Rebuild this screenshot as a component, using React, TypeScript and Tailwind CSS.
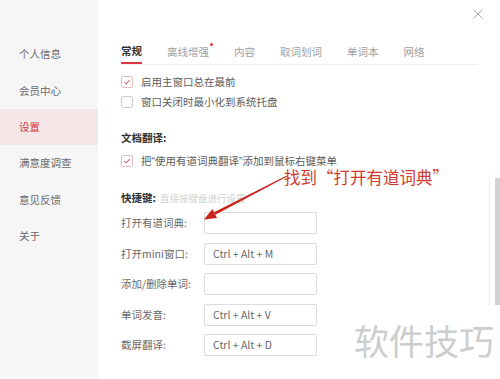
import React from 'react';

const font = { fontFamily: '"Noto Sans CJK SC", "Noto Sans", sans-serif' };

const menu = ['个人信息', '会员中心', '设置', '满意度调查', '意见反馈', '关于'];
const tabs = ['常规', '离线增强', '内容', '取词划词', '单词本', '网络'];
const keys = [
  { label: '打开有道词典:', value: '' },
  { label: '打开mini窗口:', value: 'Ctrl + Alt + M' },
  { label: '添加/删除单词:', value: '' },
  { label: '单词发音:', value: 'Ctrl + Alt + V' },
  { label: '截屏翻译:', value: 'Ctrl + Alt + D' },
];

const Check = ({ on }: { on: boolean }) => (
  <span
    className={`w-[12px] h-[12px] rounded-[2px] border flex items-center justify-center bg-white ${
      on ? 'border-[#e6bcbe]' : 'border-[#cccccc]'
    }`}
  >
    {on && (
      <svg width="8" height="8" viewBox="0 0 8 8">
        <path d="M1.3 4.2 L3.2 5.9 L6.7 2.1" fill="none" stroke="#d9363e" strokeWidth="1" />
      </svg>
    )}
  </span>
);

const Row = ({ on, children }: { on: boolean; children: React.ReactNode }) => (
  <div className="h-[20px] flex items-center gap-[8px]">
    <Check on={on} />
    <span className="text-[10.5px] leading-[14px] text-[#5c5c5c]">{children}</span>
  </div>
);

const Q = ({ c }: { c: string }) => (
  <span style={{ fontFamily: '"Liberation Sans", sans-serif' }}>{c}</span>
);

export default function App() {
  return (
    <div className="relative w-[500px] h-[379px] overflow-hidden bg-white flex" style={font}>
      <div className="w-[98px] h-full bg-[#f6f6f6] pt-[36px]">
        {menu.map((m) => (
          <div
            key={m}
            className={`h-[36.4px] flex items-center pl-[19px] text-[10.5px] ${
              m === '设置' ? 'bg-[#f5e7e7] text-[#d9363e]' : 'text-[#6a6a6a]'
            }`}
          >
            {m}
          </div>
        ))}
      </div>

      <div className="flex-1 pt-[39px] pl-[23px] pr-[22px]">
        <div className="flex gap-[25px] h-[26px] border-b border-[#eeeeee]">
          {tabs.map((t, i) => (
            <div
              key={t}
              className={`relative h-full flex items-center text-[10.5px] ${
                i === 0 ? 'font-bold text-[#333] border-b-2 border-[#d9363e] -mb-px' : 'text-[#a0a0a0]'
              }`}
            >
              {t}
              {i === 1 && (
                <span className="absolute right-[-4px] top-[4px] w-[3px] h-[3px] rounded-full bg-[#e0393e]" />
              )}
            </div>
          ))}
        </div>

        <div className="pt-[7px]">
          <Row on>启用主窗口总在最前</Row>
          <Row on={false}>窗口关闭时最小化到系统托盘</Row>
        </div>

        <div className="h-[20px] mt-[16px] flex items-center text-[10.5px] font-bold text-[#333]">
          文档翻译:
        </div>
        <div className="mt-[3px]">
          <Row on>
            把<Q c="“" />使用有道词典翻译<Q c="”" />添加到鼠标右键菜单
          </Row>
        </div>

        <div className="h-[20px] mt-[17px] flex items-center gap-[4px]">
          <span className="text-[10.5px] font-bold text-[#333]">快捷键:</span>
          <span className="text-[9.5px] text-[#d2d2d2]">直接按键盘进行设置</span>
        </div>

        <div className="mt-[4px] flex flex-col gap-[8.5px]">
          {keys.map((k) => (
            <div key={k.label} className="flex items-center">
              <span className="w-[83px] text-[10.5px] text-[#6a6a6a]">{k.label}</span>
              <div className="w-[113px] h-[22px] border border-[#dcdcdc] rounded-[2px] flex items-center pl-[8px] text-[10.5px] text-[#6a6a6a]">
                {k.value}
              </div>
            </div>
          ))}
        </div>
      </div>

      <button className="absolute left-[472px] top-[8px] w-[12px] h-[12px]">
        <svg width="12" height="12" viewBox="0 0 12 12">
          <path d="M1.5 1.5 L10.5 10.5 M10.5 1.5 L1.5 10.5" stroke="#a8a8a8" strokeWidth="1" />
        </svg>
      </button>

      <div className="absolute left-[489px] top-[175px] w-[11px] h-[130px] border-l border-[#f0f0f0]">
        <div className="ml-[5px] mt-[3px] w-[5px] h-[127px] bg-[#d2d2d2]" />
      </div>

      <svg className="absolute left-0 top-0 pointer-events-none" width="500" height="379" viewBox="0 0 500 379">
        <polygon points="287.2,176.4 286.8,175.6 214,212.2 215.4,214.8" fill="#c8261e" />
        <polygon points="204,219.5 212.4,209.1 217,217.9" fill="#c8261e" />
      </svg>

      <div className="absolute left-[284px] top-[169px] text-[16.5px] leading-[17px] text-[#d3392f]">
        找到“打开有道词典”
      </div>

      <div className="absolute left-[354px] top-[320px] text-[35px] leading-[40px] text-[#cdcdcd]">
        软件技巧
      </div>
    </div>
  );
}
